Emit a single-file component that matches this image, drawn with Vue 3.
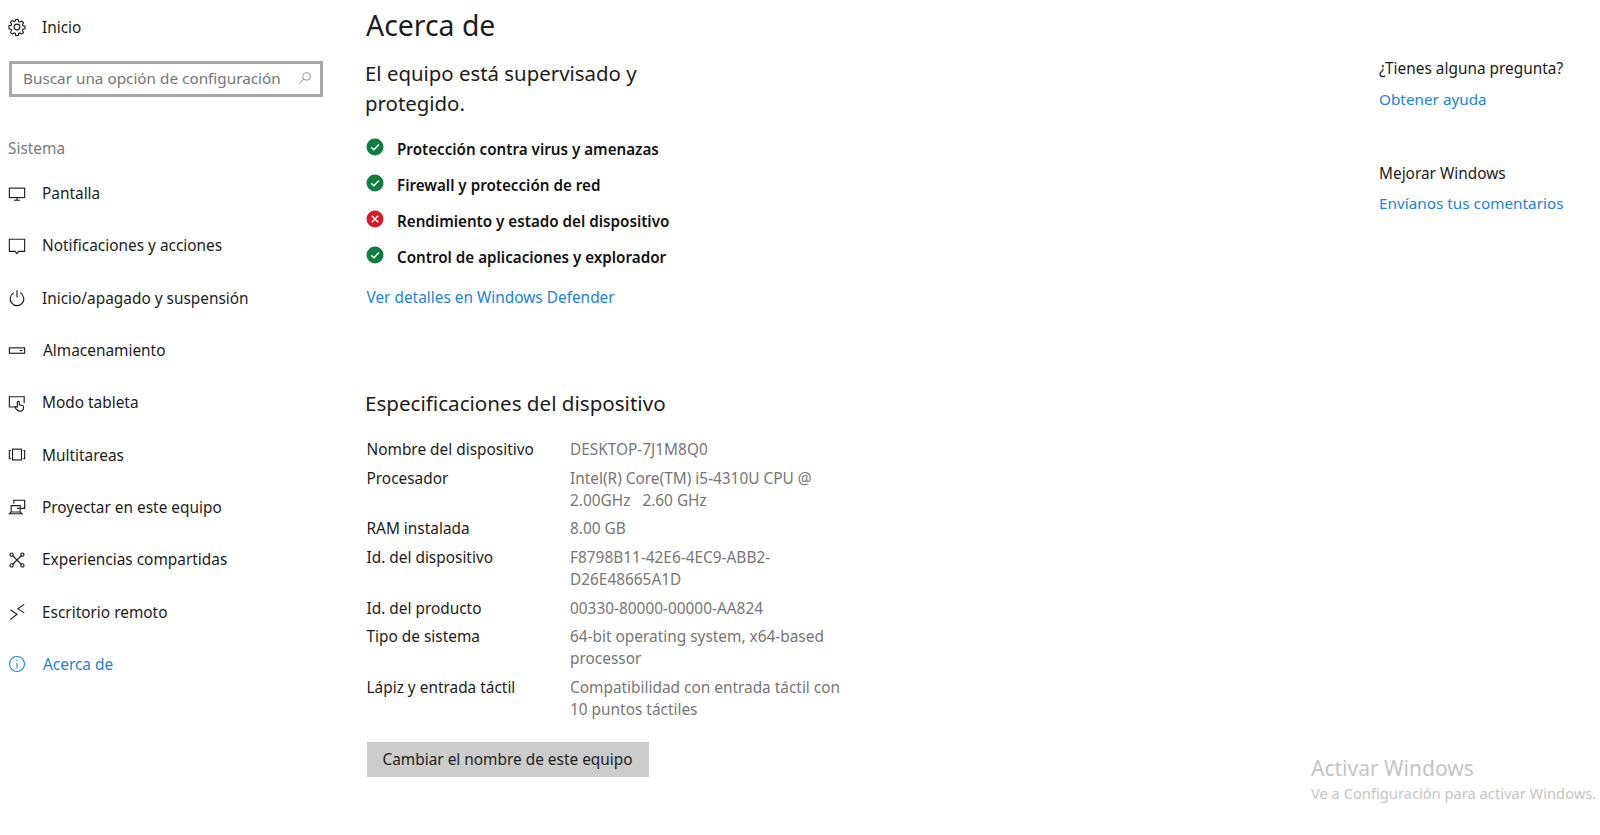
<template>
  <div class="page">
    <nav class="sidebar">
      <div class="nav-row home">
        <svg class="icon" viewBox="0 0 20 20"><path d="M8.6 1.6h2.8l.4 2.3 1.5.7 2-1.3 2 2-1.3 2 .6 1.5 2.3.4v2.8l-2.3.4-.6 1.5 1.3 2-2 2-2-1.3-1.5.6-.4 2.3H8.6l-.4-2.3-1.5-.6-2 1.3-2-2 1.3-2-.6-1.5-2.3-.4V8.6l2.3-.4.6-1.5-1.3-2 2-2 2 1.3 1.5-.7z" /><circle cx="10" cy="10" r="3.2" /></svg>
        <span>Inicio</span>
      </div>
      <div class="search">
        <span>Buscar una opción de configuración</span>
        <svg viewBox="0 0 16 16"><circle cx="9.8" cy="6.2" r="4.4" /><path d="M6.6 9.4 1.5 14.5" /></svg>
      </div>
      <div class="section">Sistema</div>
      <div class="nav-list">
        <div class="nav-row" v-for="item in navItems" :key="item.label" :class="{ active: item.active }">
          <svg class="icon" viewBox="0 0 20 20" v-html="item.icon"></svg>
          <span :style="{ marginLeft: item.shift + 'px' }">{{ item.label }}</span>
        </div>
      </div>
    </nav>

    <main class="content">
      <h1>Acerca de</h1>
      <h2 class="status-title">El equipo está supervisado y<br />protegido.</h2>
      <ul class="status-list">
        <li v-for="s in statuses" :key="s.label">
          <svg class="status-icon" viewBox="0 0 18 18">
            <circle cx="9" cy="9" r="8.5" :fill="s.ok ? '#107c41' : '#d01c2b'" />
            <path v-if="s.ok" d="M5.2 9.2 7.9 11.8 12.9 6.6" />
            <path v-else d="M5.8 5.8 12.2 12.2M12.2 5.8 5.8 12.2" />
          </svg>
          <span>{{ s.label }}</span>
        </li>
      </ul>
      <a class="link defender">Ver detalles en Windows Defender</a>

      <h2 class="spec-title">Especificaciones del dispositivo</h2>
      <dl class="specs">
        <template v-for="row in specs" :key="row.label">
          <dt>{{ row.label }}</dt>
          <dd>
            <div v-for="line in row.lines" :key="line">{{ line }}</div>
          </dd>
        </template>
      </dl>
      <button class="rename">Cambiar el nombre de este equipo</button>
    </main>

    <aside class="help">
      <div class="help-block">
        <div>¿Tienes alguna pregunta?</div>
        <a class="link">Obtener ayuda</a>
      </div>
      <div class="help-block">
        <div>Mejorar Windows</div>
        <a class="link">Envíanos tus comentarios</a>
      </div>
    </aside>

    <div class="watermark">
      <div class="wm-title">Activar Windows</div>
      <div class="wm-sub">Ve a Configuración para activar Windows.</div>
    </div>
  </div>
</template>

<script setup>
const navItems = [
  { label: "Pantalla", icon: '<rect x="1.5" y="3.5" width="17" height="10.5" /><path d="M10 14v3M6.5 17h7" />' },
  { label: "Notificaciones y acciones", icon: '<path d="M1.5 2.5h17v13.5h-6.5L10 18.5 8 16H1.5z" />' },
  { label: "Inicio/apagado y suspensión", icon: '<path d="M6.3 4.2a7.6 7.6 0 1 0 7.4 0M10 1.5v8" />' },
  { label: "Almacenamiento", shift: 1, icon: '<rect x="1.5" y="6.5" width="17" height="6" /><path d="M13 9.5h3" />' },
  { label: "Modo tableta", icon: '<path d="M9 14.5H1.5V3h16.5v7" /><path d="M11.5 19c-2-1.6-3.6-3-3.6-4.2s1.2-1.2 2.4-.2V9.2c0-1.4 2.2-1.4 2.2 0v2.8l3.4.8c1 .3 1.6 1 1.4 2.2l-.4 2.2c-.8 2.4-5.2 2.6-6.8 0z" />' },
  { label: "Multitareas", icon: '<rect x="5" y="3.5" width="10" height="12" /><path d="M3 5H1.5v9H3M17 5h1.5v9H17" />' },
  { label: "Proyectar en este equipo", icon: '<path d="M6.5 6V2.5h12v9h-5M10 11.5h3" /><path d="M3.5 8.5h10v7h-10zM1.5 17.5h14l-2-2h-10z" />' },
  { label: "Experiencias compartidas", icon: '<path d="M5 5 15 15M15 5 5 15" /><circle cx="4" cy="4" r="1.8" /><circle cx="16" cy="4" r="1.8" /><circle cx="4" cy="16" r="1.8" /><circle cx="16" cy="16" r="1.8" />' },
  { label: "Escritorio remoto", icon: '<path d="M2.5 7.5 10 12.5 2.5 18.5M18 1.5 11 6.5 18 11" />' },
  { label: "Acerca de", active: true, shift: 1, icon: '<circle cx="10" cy="10" r="8.3" /><path d="M10 8.8v6" /><path d="M10 5.2v1.6" />' },
];

const statuses = [
  { label: "Protección contra virus y amenazas", ok: true },
  { label: "Firewall y protección de red", ok: true },
  { label: "Rendimiento y estado del dispositivo", ok: false },
  { label: "Control de aplicaciones y explorador", ok: true },
];

const specs = [
  { label: "Nombre del dispositivo", lines: ["DESKTOP-7J1M8Q0"] },
  { label: "Procesador", lines: ["Intel(R) Core(TM) i5-4310U CPU @", "2.00GHz\u00a0\u00a0 2.60 GHz"] },
  { label: "RAM instalada", lines: ["8.00 GB"] },
  { label: "Id. del dispositivo", lines: ["F8798B11-42E6-4EC9-ABB2-", "D26E48665A1D"] },
  { label: "Id. del producto", lines: ["00330-80000-00000-AA824"] },
  { label: "Tipo de sistema", lines: ["64-bit operating system, x64-based", "processor"] },
  { label: "Lápiz y entrada táctil", lines: ["Compatibilidad con entrada táctil con", "10 puntos táctiles"] },
];
</script>

<style>
html,
body {
  background: #fff;
}
</style>

<style scoped>
.page {
  position: relative;
  display: flex;
  width: 1600px;
  height: 835px;
  overflow: hidden;
  font-family: "Noto Sans", "Open Sans", sans-serif;
  font-size: 15.4px;
  color: #1c1c1c;
  background: #fff;
}

.sidebar {
  width: 365px;
  flex-shrink: 0;
  padding: 13.5px 0 0 8px;
  box-sizing: border-box;
}

.nav-row {
  display: flex;
  align-items: center;
  height: 52.3px;
}
.nav-row.home {
  height: 27px;
}
.nav-row.active {
  color: #1d83d4;
}

.icon {
  width: 18px;
  height: 18px;
  margin-right: 16px;
  flex-shrink: 0;
  fill: none;
  stroke: currentColor;
  stroke-width: 1.25;
}

.search {
  display: flex;
  align-items: center;
  justify-content: space-between;
  width: 314px;
  height: 36px;
  margin: 20px 0 0 1px;
  padding: 0 8px 2px 11px;
  box-sizing: border-box;
  border: 3px solid #a6a6a6;
  color: #767676;
  font-size: 15.3px;
}
.search svg {
  width: 14px;
  height: 14px;
  fill: none;
  stroke: #8a8a8a;
  stroke-width: 1;
}

.section {
  margin-top: 42px;
  height: 20px;
  line-height: 20px;
  color: #7a7a7a;
}

.nav-list {
  margin-top: 9px;
}

.content {
  width: 520px;
  flex-shrink: 0;
}

h1 {
  margin: 7px 0 0 1px;
  font-size: 28.4px;
  font-weight: 400;
  line-height: 36px;
}

.status-title {
  margin: 15px 0 0 0;
  font-size: 20.4px;
  font-weight: 400;
  line-height: 30px;
}

.status-list {
  list-style: none;
  margin: 13px 0 0 0;
  padding: 0;
}
.status-list li {
  display: flex;
  align-items: center;
  height: 36px;
  font-size: 15.2px;
  font-weight: 600;
  color: #111;
}
.status-icon {
  width: 18px;
  height: 18px;
  margin: -4px 13px 0 1px;
  flex-shrink: 0;
}
.status-icon path {
  fill: none;
  stroke: #fff;
  stroke-width: 1.4;
}

.link {
  display: block;
  color: #1d83d4;
}
.defender {
  margin: 12px 0 0 1.5px;
  line-height: 22px;
}

.spec-title {
  margin: 79px 0 0 0;
  font-size: 20.6px;
  font-weight: 400;
  line-height: 30px;
}

.specs {
  display: grid;
  grid-template-columns: 203.5px 1fr;
  row-gap: 6.7px;
  margin: 21px 0 0 1.5px;
  line-height: 22px;
}
dt {
  margin: 0;
}
dd {
  margin: 0;
  color: #767676;
  font-size: 15.4px;
}

.rename {
  display: block;
  width: 282px;
  height: 35px;
  margin: 20.5px 0 0 1.5px;
  padding: 0;
  border: 0;
  background: #cccccc;
  color: #1c1c1c;
  font: inherit;
}

.help {
  margin-left: auto;
  width: 221px;
  padding-top: 58px;
  line-height: 22px;
  box-sizing: border-box;
}
.help-block {
  height: 104.5px;
}
.help-block .link {
  margin-top: 7.5px;
  font-size: 15.3px;
}

.watermark {
  position: absolute;
  left: 1311px;
  top: 755px;
  color: #c4c4c4;
}
.wm-title {
  font-size: 21px;
  line-height: 27px;
}
.wm-sub {
  font-size: 14.7px;
  line-height: 23px;
  white-space: nowrap;
}
</style>
